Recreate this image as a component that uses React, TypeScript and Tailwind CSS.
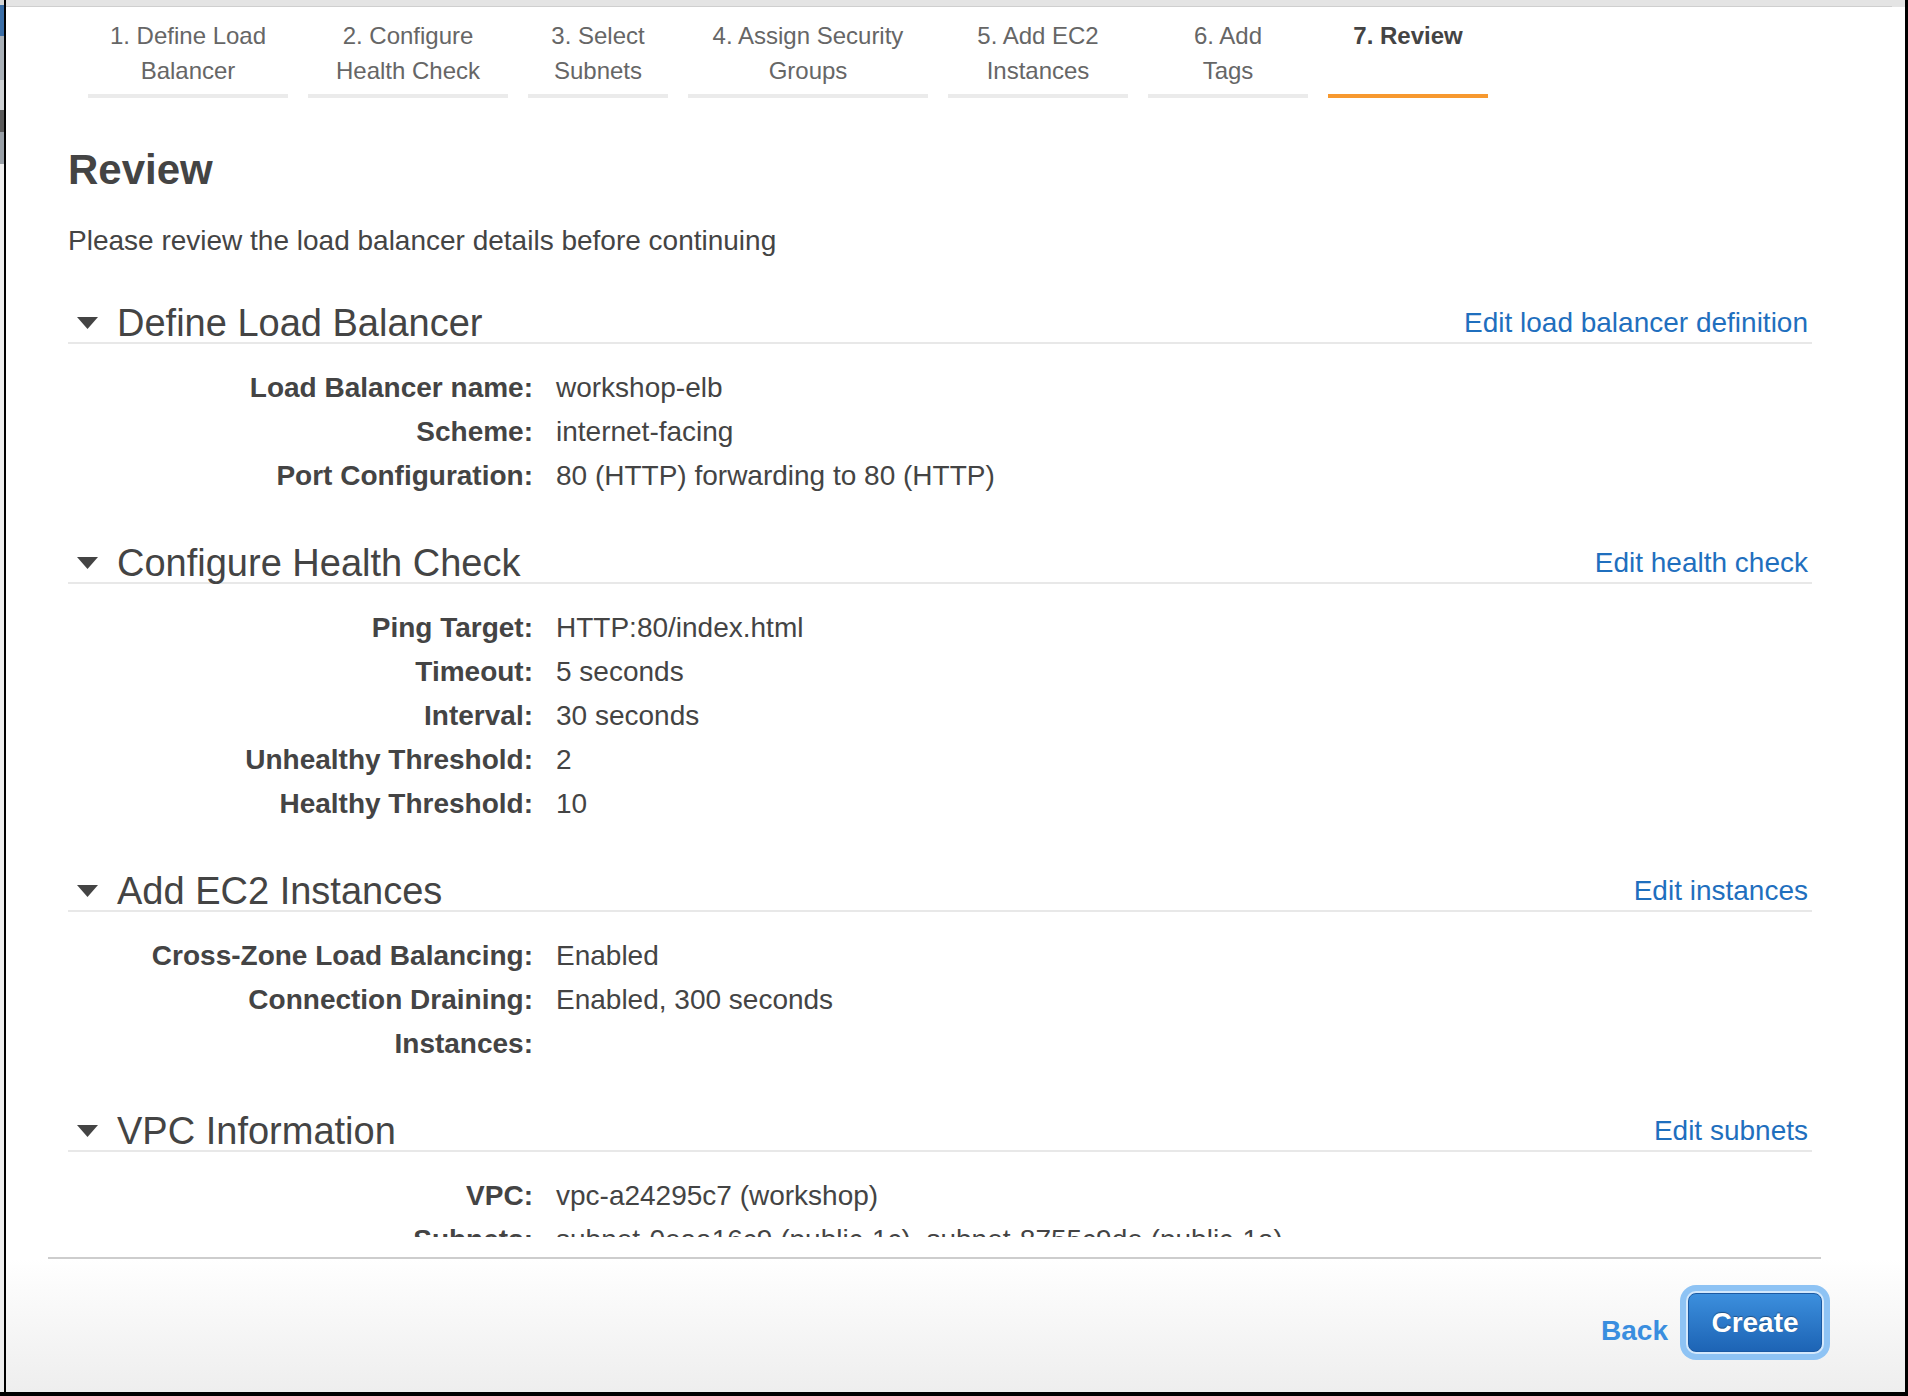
import React from 'react';

const steps = [
    { lines: ['1. Define Load', 'Balancer'], width: 'w-[200px]', active: false },
    { lines: ['2. Configure', 'Health Check'], width: 'w-[200px]', active: false },
    { lines: ['3. Select', 'Subnets'], width: 'w-[140px]', active: false },
    { lines: ['4. Assign Security', 'Groups'], width: 'w-[240px]', active: false },
    { lines: ['5. Add EC2', 'Instances'], width: 'w-[180px]', active: false },
    { lines: ['6. Add', 'Tags'], width: 'w-[160px]', active: false },
    { lines: ['7. Review'], width: 'w-[160px]', active: true },
];

const sections = [
    {
        title: 'Define Load Balancer',
        link: 'Edit load balancer definition',
        rows: [
            ['Load Balancer name:', 'workshop-elb'],
            ['Scheme:', 'internet-facing'],
            ['Port Configuration:', '80 (HTTP) forwarding to 80 (HTTP)'],
        ],
    },
    {
        title: 'Configure Health Check',
        link: 'Edit health check',
        rows: [
            ['Ping Target:', 'HTTP:80/index.html'],
            ['Timeout:', '5 seconds'],
            ['Interval:', '30 seconds'],
            ['Unhealthy Threshold:', '2'],
            ['Healthy Threshold:', '10'],
        ],
    },
    {
        title: 'Add EC2 Instances',
        link: 'Edit instances',
        rows: [
            ['Cross-Zone Load Balancing:', 'Enabled'],
            ['Connection Draining:', 'Enabled, 300 seconds'],
            ['Instances:', ''],
        ],
    },
    {
        title: 'VPC Information',
        link: 'Edit subnets',
        rows: [
            ['VPC:', 'vpc-a24295c7 (workshop)'],
            ['Subnets:', 'subnet-0eaa16c9 (public-1c), subnet-8755c9de (public-1a)'],
        ],
    },
];

function Caret() {
    return (
        <svg width="21" height="12" viewBox="0 0 21 12" className="shrink-0">
            <path d="M0 0H21L10.5 12Z" fill="#444444" />
        </svg>
    );
}

function Section({ title, link, rows }: { title: string; link: string; rows: string[][] }) {
    return (
        <div className="flex flex-col">
            <div className="flex items-end justify-between border-b-2 border-[#e8e8e8]">
                <div className="flex items-center h-[38px] pl-[9px] gap-[19px]">
                    <Caret />
                    <span className="text-[38px] leading-none text-[#444444]">{title}</span>
                </div>
                <a className="text-[28px] leading-[39px] text-[#1f6fbe] pr-[4px] cursor-pointer">{link}</a>
            </div>
            <div className="pt-[22px] pb-[45px] flex flex-col">
                {rows.map(([k, v]) => (
                    <div key={k} className="flex h-[44px] items-center text-[28px] leading-[44px] whitespace-nowrap">
                        <span className="w-[465px] text-right font-bold text-[#444444]">{k}</span>
                        <span className="ml-[23px] text-[#444444]">{v}</span>
                    </div>
                ))}
            </div>
        </div>
    );
}

export default function App() {
    return (
        <div className="w-[1908px] h-[1396px] bg-black flex font-['Liberation_Sans',Arial,sans-serif] overflow-hidden">
            {/* desktop peeking out at the left */}
            <div className="w-[4px] h-[1392px] flex flex-col">
                <div className="h-[5px] bg-[#d6d6d6]" />
                <div className="h-[31px] bg-[#3b6ea6]" />
                <div className="h-[44px] bg-[#a9b0b7]" />
                <div className="h-[30px] bg-[#cdd0d3]" />
                <div className="h-[22px] bg-[#5a5a5a]" />
                <div className="h-[32px] bg-[#99a0a7]" />
                <div className="flex-1 bg-[#eeeeee]" />
            </div>
            <div className="w-[2px] h-[1392px] bg-black" />

            <div className="w-[1899px] h-[1392px] bg-white flex flex-col">
                <div className="h-[7px] bg-[#e4e4e4] flex flex-col justify-end">
                    <div className="h-[1px] w-[1886px] bg-[#cfcfcf]" />
                </div>

                {/* scrollable body */}
                <div className="h-[1230px] overflow-hidden">
                    <div className="flex gap-[20px] pl-[82px] pt-[11px]">
                        {steps.map((s) => (
                            <div key={s.lines[0]} className={`${s.width} flex flex-col`}>
                                <div className={`h-[70px] text-center text-[24px] leading-[35px] ${s.active ? 'font-bold text-[#444444]' : 'text-[#666666]'}`}>
                                    {s.lines.map((l) => (
                                        <div key={l}>{l}</div>
                                    ))}
                                </div>
                                <div className={`mt-[6px] h-[4px] ${s.active ? 'bg-[#f7992f]' : 'bg-[#ebebeb]'}`} />
                            </div>
                        ))}
                    </div>

                    <div className="pl-[62px] w-[1806px]">
                        <h1 className="mt-[51px] text-[42px] leading-none font-bold text-[#444444]">Review</h1>
                        <p className="mt-[30px] text-[28px] leading-[40px] text-[#444444]">Please review the load balancer details before continuing</p>
                        <div className="mt-[42px] flex flex-col">
                            {sections.map((s) => (
                                <Section key={s.title} title={s.title} link={s.link} rows={s.rows} />
                            ))}
                        </div>
                    </div>
                </div>

                <div className="mt-[20px] ml-[42px] w-[1773px] h-[2px] bg-[#cdcdcd]" />

                <div className="flex-1 bg-gradient-to-b from-white to-[#eeeeee] flex justify-end items-start pt-[34px] pr-[83px]">
                    <div className="flex items-center gap-[20px]">
                        <a className="mt-[16px] text-[28px] leading-[32px] font-bold text-[#3a8edf] cursor-pointer">Back</a>
                        <button className="w-[134px] h-[59px] rounded-[8px] border border-[#1b5aa3] bg-gradient-to-b from-[#3c8fdd] to-[#1d64b5] text-white text-[28px] font-bold shadow-[0_0_0_2px_#d3e8fc,0_0_0_8px_#8ec3f4] [text-shadow:0_-1px_1px_rgba(0,0,0,0.35)]">
                            Create
                        </button>
                    </div>
                </div>
            </div>
            <div className="w-[3px] h-[1392px] bg-black" />
        </div>
    );
}
